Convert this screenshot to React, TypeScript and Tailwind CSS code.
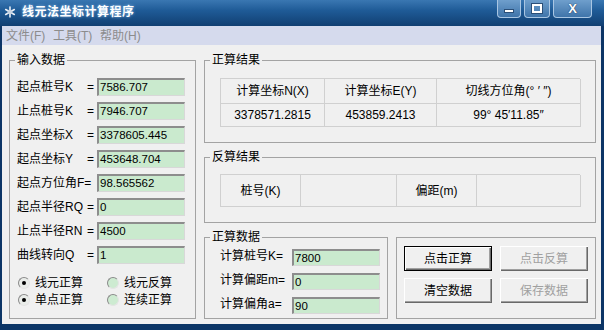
import React from 'react';

const inputRows: [string, string, string][] = [
  ['起点桩号K', '=', '7586.707'],
  ['止点桩号K', '=', '7946.707'],
  ['起点坐标X', '=', '3378605.445'],
  ['起点坐标Y', '=', '453648.704'],
  ['起点方位角F=', '', '98.565562'],
  ['起点半径RQ', '=', '0'],
  ['止点半径RN', '=', '4500'],
  ['曲线转向Q', '=', '1'],
];

const calcRows: [string, string][] = [
  ['计算桩号K=', '7800'],
  ['计算偏距m=', '0'],
  ['计算偏角a=', '90'],
];

const Field = ({ value, short }: { value: string; short?: boolean }) => (
  <div
    className={`w-[88px] ${short ? 'h-[17px]' : 'h-[18px]'} bg-[#caeace] border-t-2 border-l-2 border-t-[#8d8d8d] border-l-[#8d8d8d] border-b border-r border-b-[#d8d8d8] border-r-[#d8d8d8] pl-[1px] text-[11.5px] leading-[14px] text-black`}
  >
    {value}
  </div>
);

const Group = ({
  title,
  className,
  inner,
  children,
}: {
  title?: string;
  className: string;
  inner: string;
  children: React.ReactNode;
}) => (
  <fieldset className={`border border-[#a3a3a3] ${className}`}>
    {title && <legend className="ml-[5px] px-[2px] text-[12px] leading-[16px] text-black">{title}</legend>}
    <div className={inner}>{children}</div>
  </fieldset>
);

const Radio = ({ checked, label }: { checked?: boolean; label: string }) => (
  <div className="flex items-center gap-[5px] w-[89px]">
    <div
      className={`w-[12px] h-[12px] ml-[1px] rounded-full border border-t-[#8a8a8a] border-l-[#8a8a8a] border-b-[#e4e4e4] border-r-[#e4e4e4] flex items-center justify-center ${
        checked ? 'bg-[#e9ece9]' : 'bg-[#cdebd1]'
      }`}
    >
      {checked && <div className="w-[4px] h-[4px] rounded-full bg-black" />}
    </div>
    <span className="text-[12px] leading-[16px]">{label}</span>
  </div>
);

const Btn = ({ label, primary, disabled }: { label: string; primary?: boolean; disabled?: boolean }) => (
  <div
    className={`w-[88px] h-[25px] flex items-center justify-center text-[12px] bg-[#f0f0f0] ${
      primary
        ? 'border border-black shadow-[inset_1px_1px_0_#fff,inset_-1px_-1px_0_#696969,inset_-2px_-2px_0_#a0a0a0]'
        : 'shadow-[inset_1px_1px_0_#fff,inset_-1px_-1px_0_#696969,inset_-2px_-2px_0_#a0a0a0]'
    } ${disabled ? 'text-[#a0a0a0]' : 'text-black'}`}
  >
    {label}
  </div>
);

export default function App() {
  return (
    <div className="w-[604px] h-[330px] bg-[#0c3566] flex flex-col overflow-hidden font-['Liberation_Sans','Noto_Sans_CJK_SC',sans-serif] text-black">
      {/* 标题栏 */}
      <div className="h-[26px] flex items-start bg-[linear-gradient(180deg,#3a77b2_0%,#1f5b97_40%,#113f72_100%)]">
        <svg width="12" height="12" viewBox="0 0 12 12" className="ml-[4px] mt-[6px]">
          <g stroke="#e8eef6" strokeWidth="1.6" strokeLinecap="round">
            <line x1="6" y1="1" x2="6" y2="11" />
            <line x1="1.7" y1="3.5" x2="10.3" y2="8.5" />
            <line x1="1.7" y1="8.5" x2="10.3" y2="3.5" />
          </g>
          <circle cx="6" cy="6" r="2.4" fill="#c7d3e2" />
        </svg>
        <span className="ml-[6px] mt-[4px] text-[12px] leading-[16px] font-bold text-white tracking-[0.5px] [text-shadow:0_0_3px_#8fc0ea]">
          线元法坐标计算程序
        </span>
        <div className="ml-auto mr-[12px] flex gap-[3px]">
          <div className="w-[24px] h-[18px] rounded-b-[4px] border border-t-0 border-[#a9c6e3] bg-[linear-gradient(180deg,#6f9fcc,#3f74aa)] flex items-center justify-center">
            <div className="w-[10px] h-[4px] mt-[5px] bg-white border border-[#2b4f78]" />
          </div>
          <div className="w-[26px] h-[18px] rounded-b-[4px] border border-t-0 border-[#a9c6e3] bg-[linear-gradient(180deg,#6f9fcc,#3f74aa)] flex items-center justify-center">
            <div className="w-[10px] h-[9px] border-2 border-white outline outline-1 outline-[#2b4f78]" />
          </div>
          <div className="w-[39px] h-[18px] rounded-b-[4px] border border-t-0 border-[#a9c6e3] bg-[linear-gradient(180deg,#6f9fcc,#3f74aa)] flex items-center justify-center">
            <span className="text-[13px] leading-[14px] font-bold text-white [text-shadow:0_0_1px_#1b3b60,0_0_1px_#1b3b60]">X</span>
          </div>
        </div>
      </div>

      <div className="pl-[2px] pr-[3px] flex flex-col">
        {/* 菜单栏 */}
        <div className="h-[19px] bg-[#d5daed] flex items-center pl-[4px] text-[12px] text-[#8c8c8c]">
          <span className="w-[47px]">文件(F)</span>
          <span className="w-[47px]">工具(T)</span>
          <span className="w-[47px]">帮助(H)</span>
        </div>

        {/* 主体 */}
        <div className="h-[279px] bg-[#f0f0f0] flex gap-[8px] pl-[7px] pt-[7px]">
          <Group title="输入数据" className="w-[184px] h-[267px]" inner="pl-[7px] pt-[7px]">
            {inputRows.map(([label, eq, v]) => (
              <div key={label} className="h-[24px] flex items-center">
                <div className="w-[80px] flex justify-between pr-[3px] text-[12px] leading-[16px]">
                  <span>{label}</span>
                  <span>{eq}</span>
                </div>
                <Field value={v} />
              </div>
            ))}
            <div className="mt-[8px] flex flex-col gap-[1px]">
              <div className="flex h-[16px]">
                <Radio checked label="线元正算" />
                <Radio label="线元反算" />
              </div>
              <div className="flex h-[16px]">
                <Radio checked label="单点正算" />
                <Radio label="连续正算" />
              </div>
            </div>
          </Group>

          <div className="w-[392px] flex flex-col">
            <Group title="正算结果" className="h-[91px]" inner="pl-[15px] pt-[10px]">
              <div className="w-[360px] grid grid-cols-[104px_112px_144px] border-l border-t border-[#d0d0d0] text-[12px]">
                <div className="h-[25px] flex items-center justify-center border-r border-b border-[#d0d0d0]">计算坐标N(X)</div>
                <div className="h-[25px] flex items-center justify-center border-r border-b border-[#d0d0d0]">计算坐标E(Y)</div>
                <div className="h-[25px] flex items-center justify-center border-r border-b border-[#d0d0d0]">切线方位角(° ′ ″)</div>
                <div className="h-[23px] flex items-center justify-center border-r border-b border-[#d0d0d0]">3378571.2815</div>
                <div className="h-[23px] flex items-center justify-center border-r border-b border-[#d0d0d0]">453859.2413</div>
                <div className="h-[23px] flex items-center justify-center border-r border-b border-[#d0d0d0]">99° 45′11.85″</div>
              </div>
            </Group>

            <Group title="反算结果" className="mt-[6px] h-[74px]" inner="pl-[15px] pt-[9px]">
              <div className="w-[360px] grid grid-cols-[80px_96px_80px_104px] border-l border-t border-[#d0d0d0] text-[12px]">
                <div className="h-[32px] flex items-center justify-center border-r border-b border-[#d0d0d0]">桩号(K)</div>
                <div className="h-[32px] border-r border-b border-[#d0d0d0]" />
                <div className="h-[32px] flex items-center justify-center border-r border-b border-[#d0d0d0]">偏距(m)</div>
                <div className="h-[32px] border-r border-b border-[#d0d0d0]" />
              </div>
            </Group>

            <div className="mt-[6px] flex gap-[8px] items-start">
              <Group title="正算数据" className="w-[184px] h-[90px]" inner="pl-[15px]">
                {calcRows.map(([label, v]) => (
                  <div key={label} className="h-[24px] flex items-center">
                    <span className="w-[72px] text-[12px] leading-[16px] -mt-[3px]">{label}</span>
                    <Field value={v} short />
                  </div>
                ))}
              </Group>
              <Group className="mt-[8px] w-[200px] h-[82px]" inner="pl-[7px] pt-[8px]">
                <div className="grid grid-cols-[88px_88px] gap-x-[8px] gap-y-[7px]">
                  <Btn label="点击正算" primary />
                  <Btn label="点击反算" disabled />
                  <Btn label="清空数据" />
                  <Btn label="保存数据" disabled />
                </div>
              </Group>
            </div>
          </div>
        </div>
      </div>
    </div>
  );
}
